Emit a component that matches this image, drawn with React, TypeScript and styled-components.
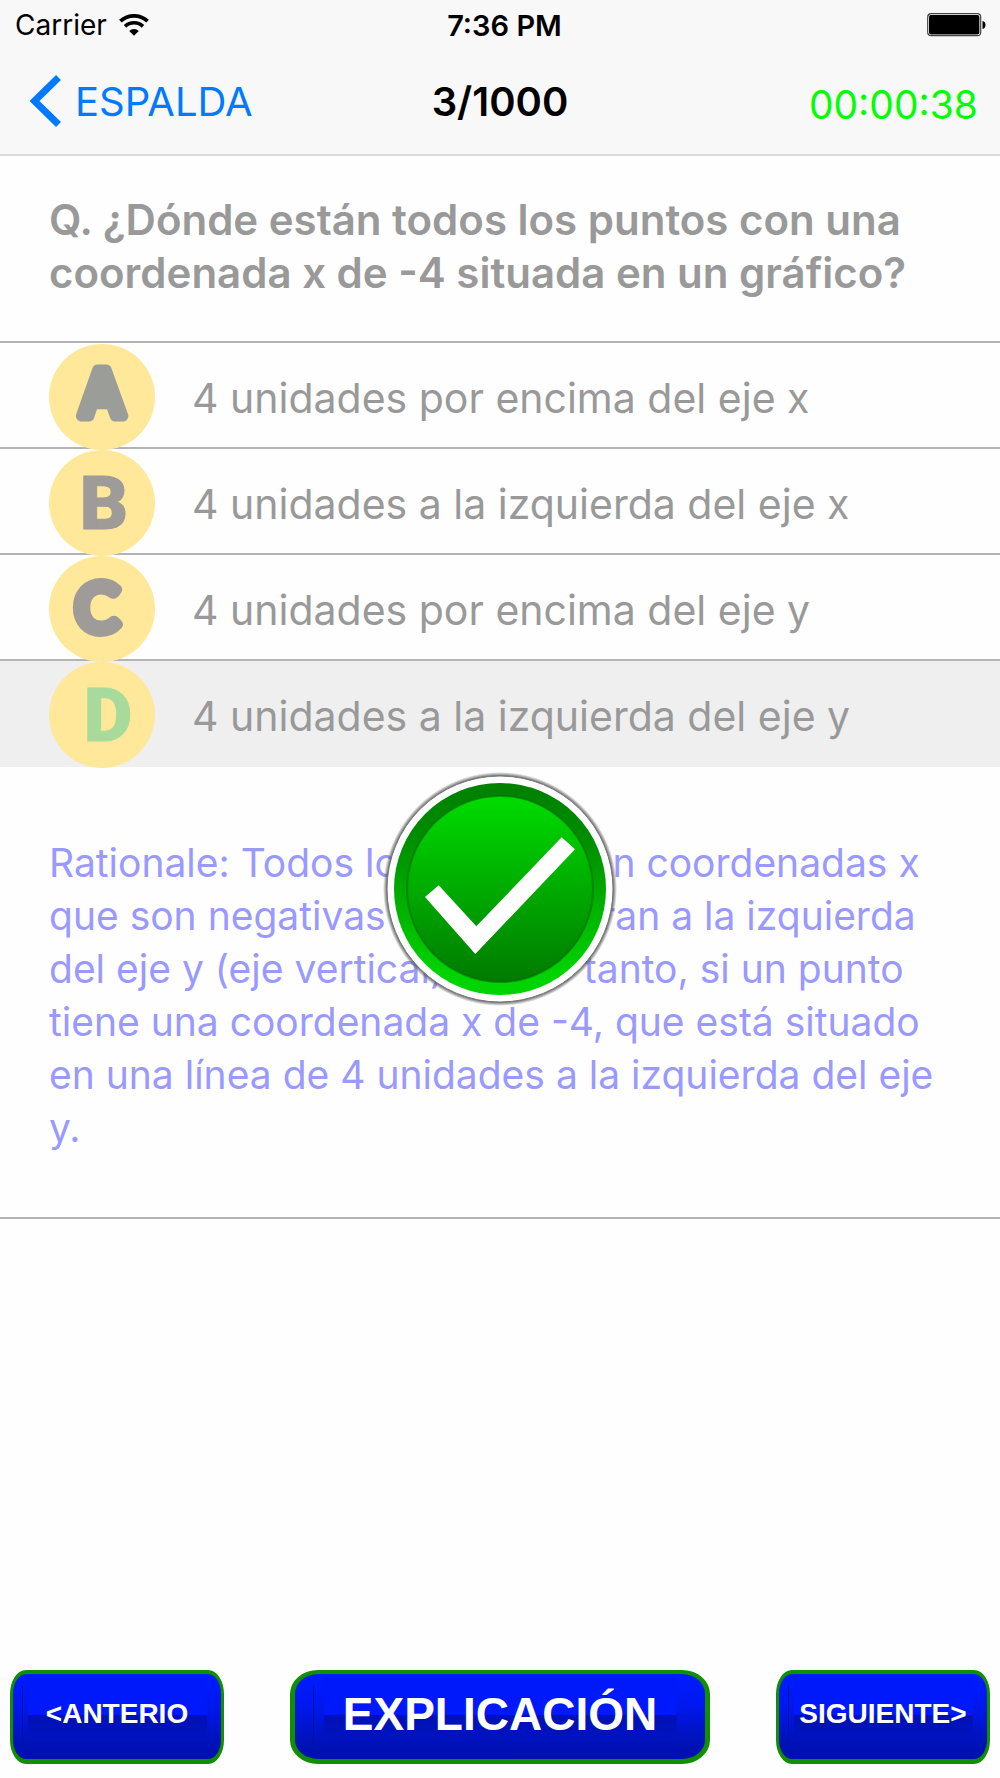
import React from "react";
import styled, { createGlobalStyle } from "styled-components";

const GlobalStyle = createGlobalStyle`
  * { box-sizing: border-box; }
  body {
    margin: 0;
    background: #fefefe;
    font-family: Inter, "Liberation Sans", sans-serif;
  }
  button {
    font-family: inherit;
    border: 0;
    padding: 0;
    background: none;
    cursor: pointer;
  }
`;

const Screen = styled.div`
  min-height: 100vh;
  display: flex;
  flex-direction: column;
`;

const Header = styled.header`
  background: #f8f8f8;
  border-bottom: 2px solid #dadada;
`;

const ThreeColumns = styled.div`
  display: grid;
  grid-template-columns: 1fr auto 1fr;
  align-items: center;
`;

const StatusBar = styled(ThreeColumns)`
  height: 50px;
  padding: 0 14px 0 15px;
  font-size: 28px;
  color: #000;
`;

const Carrier = styled.div`
  display: flex;
  align-items: center;
  gap: 12px;
`;

const Clock = styled.div`
  padding-left: 8px;
  font-size: 29px;
  font-weight: 600;
`;

const Battery = styled.svg`
  justify-self: end;
`;

const NavBar = styled(ThreeColumns)`
  height: 104px;
  padding: 0 22px 2px;
`;

const BackButton = styled.button`
  justify-self: start;
  display: flex;
  align-items: center;
  gap: 14px;
  padding-left: 8px;
  font-size: 40px;
  color: #007aff;
`;

const Progress = styled.h1`
  margin: 0;
  font-size: 40px;
  font-weight: 600;
  color: #000;
`;

const Timer = styled.time`
  justify-self: end;
  padding-top: 6px;
  font-size: 39px;
  color: #00ff00;
`;

const Question = styled.h2`
  margin: 0;
  padding: 37px 50px 42px 49px;
  border-bottom: 2px solid #b4b4b4;
  font-size: 42px;
  line-height: 53px;
  font-weight: 600;
  color: #999;
`;

const Options = styled.ul`
  list-style: none;
  margin: 0;
  padding: 0;
`;

const Option = styled.button<{ $selected: boolean }>`
  display: flex;
  align-items: flex-start;
  gap: 36px;
  width: 100%;
  height: 106px;
  padding: 0 48px;
  border-bottom: 2px solid ${(p) => (p.$selected ? "#efefef" : "#b4b4b4")};
  background: ${(p) => (p.$selected ? "#efefef" : "transparent")};
  text-align: left;
`;

const Badge = styled.svg`
  flex: none;
  position: relative;
`;

const BadgeLetter = styled.text`
  text-anchor: middle;
  stroke-linejoin: round;
`;

const OptionText = styled.span`
  font-size: 41px;
  line-height: 110px;
  color: #999;
`;

const Explanation = styled.section`
  position: relative;
  padding: 69px 49px 63px;
  border-bottom: 2px solid #b4b4b4;
`;

const Rationale = styled.p`
  margin: 0;
  font-size: 39px;
  line-height: 53px;
  color: #9999ff;
`;

const ResultMark = styled.svg`
  position: absolute;
  top: 5px;
  left: 50%;
  margin-left: -117px;
`;

const Footer = styled.footer`
  margin-top: auto;
  padding: 24px 10px 14px;
  display: grid;
  grid-template-columns: 214fr 420fr 214fr;
  gap: 66px;
`;

const GlossyButton = styled.button<{ $wide?: boolean }>`
  height: 94px;
  min-width: 0;
  padding-bottom: 6px;
  border: 4px solid #109000;
  border-width: ${(p) => (p.$wide ? "4px 5px 5px" : "4px 3px 5px")};
  border-radius: ${(p) => (p.$wide ? "28px / 24px" : "16px / 24px")};
  background:
    linear-gradient(#0010a8, #0010a8) ${(p) => (p.$wide ? "18px" : "9px")} 12px / 1px 60px no-repeat,
    linear-gradient(#0019fa 0 58%, #0012b4 59%, #0013c0 100%) 50% 4px / 86% 63px no-repeat,
    linear-gradient(#001cff, #0018f0 35%, #0012b8 80%, #0010b0);
  color: #fff;
  font-family: "Liberation Sans", sans-serif;
  font-weight: 700;
  font-size: ${(p) => (p.$wide ? "46px" : "28px")};
  line-height: 1;
  white-space: nowrap;
`;

const ROUNDED = { family: "Inter, sans-serif", weight: 500, size: 63, stroke: 11 };
const OPEN_ROUNDED = { family: "Lato, sans-serif", weight: 400, size: 65, stroke: 11 };
const SQUARE = { family: "Roboto, sans-serif", weight: 900, size: 75, stroke: 1 };

const options = [
  { letter: "A", text: "4 unidades por encima del eje x", x: 54, y: 73, face: ROUNDED, ink: "#9b9d98" },
  { letter: "B", text: "4 unidades a la izquierda del eje x", x: 56, y: 80, face: SQUARE, ink: "#9e9b98" },
  { letter: "C", text: "4 unidades por encima del eje y", x: 49, y: 76, face: OPEN_ROUNDED, ink: "#9e9b98" },
  { letter: "D", text: "4 unidades a la izquierda del eje y", x: 60, y: 80, face: SQUARE, ink: "#a8db9b" },
];

function WifiIcon() {
  return (
    <svg width="30" height="22" viewBox="0 0 30 22" fill="none" stroke="#000" aria-hidden="true">
      <path d="M1.4 7.2A20 20 0 0 1 28.6 7.2" strokeWidth="3.8" />
      <path d="M6 12.4A13 13 0 0 1 24 12.4" strokeWidth="3.6" />
      <path d="M10.2 17A7 7 0 0 1 19.8 17L15 21.8Z" fill="#000" stroke="none" />
    </svg>
  );
}

function BatteryIcon() {
  return (
    <Battery width="59" height="24" viewBox="0 0 59 24" role="img" aria-label="Battery full">
      <rect x="0.7" y="0.7" width="53" height="22" rx="3.5" fill="#fff" stroke="#444" strokeWidth="1.2" />
      <rect x="2" y="2" width="50.4" height="19.4" rx="2" fill="#000" />
      <path d="M55.5 8q3 .5 3 4t-3 4z" fill="#000" />
    </Battery>
  );
}

function CorrectMark() {
  return (
    <ResultMark width="234" height="234" viewBox="0 0 234 234" role="img" aria-label="Correcto">
      <defs>
        <linearGradient id="ring" x1="0" y1="0" x2="0" y2="1">
          <stop offset="0" stopColor="#008000" />
          <stop offset="0.25" stopColor="#008c00" />
          <stop offset="0.9" stopColor="#00d400" />
        </linearGradient>
        <linearGradient id="face" x1="0" y1="0" x2="0" y2="1">
          <stop offset="0" stopColor="#00dc00" />
          <stop offset="1" stopColor="#007a00" />
        </linearGradient>
        <radialGradient id="halo">
          <stop offset="0.96" stopColor="#555" />
          <stop offset="1" stopColor="#555" stopOpacity="0" />
        </radialGradient>
      </defs>
      <circle cx="117" cy="117" r="117" fill="url(#halo)" />
      <circle cx="117" cy="117" r="113" fill="#fff" stroke="#777" strokeWidth="1" />
      <circle cx="117" cy="117" r="106" fill="url(#ring)" />
      <circle cx="117" cy="117" r="93" fill="url(#face)" stroke="#006400" strokeOpacity="0.5" strokeWidth="2" />
      <path d="M42 125L55.7 113.3L93.3 154.3L178.7 65.3L192 77.3L92.3 182Z" fill="#fff" />
    </ResultMark>
  );
}

export default function App() {
  const selected = "D";
  return (
    <Screen>
      <GlobalStyle />
      <Header>
        <StatusBar>
          <Carrier>
            Carrier <WifiIcon />
          </Carrier>
          <Clock>7:36 PM</Clock>
          <BatteryIcon />
        </StatusBar>
        <NavBar>
          <BackButton type="button">
            <svg width="31" height="52" viewBox="0 0 31 52" fill="none" aria-hidden="true">
              <path d="M28.5 2.5L4.5 26L28.5 49.5" stroke="#007aff" strokeWidth="7" />
            </svg>
            ESPALDA
          </BackButton>
          <Progress>3/1000</Progress>
          <Timer>00:00:38</Timer>
        </NavBar>
      </Header>
      <main>
        <Question>Q. ¿Dónde están todos los puntos con una coordenada x de -4 situada en un gráfico?</Question>
        <Options>
          {options.map((o) => (
            <li key={o.letter}>
              <Option type="button" $selected={o.letter === selected} aria-pressed={o.letter === selected}>
                <Badge width="108" height="108" viewBox="0 0 108 108">
                  <circle cx="54" cy="54" r="53" fill="#ffe899" />
                  <BadgeLetter
                    x={o.x}
                    y={o.y}
                    fontFamily={o.face.family}
                    fontWeight={o.face.weight}
                    fontSize={o.face.size}
                    fill={o.ink}
                    stroke={o.ink}
                    strokeWidth={o.face.stroke}
                  >
                    {o.letter}
                  </BadgeLetter>
                </Badge>
                <OptionText>{o.text}</OptionText>
              </Option>
            </li>
          ))}
        </Options>
        <Explanation>
          <Rationale>
            Rationale: Todos los puntos con coordenadas x que son negativas se encuentran a la izquierda del eje y (eje
            vertical). Por lo tanto, si un punto tiene una coordenada x de -4, que está situado en una línea de 4
            unidades a la izquierda del eje y.
          </Rationale>
          <CorrectMark />
        </Explanation>
      </main>
      <Footer>
        <GlossyButton type="button">&lt;ANTERIO</GlossyButton>
        <GlossyButton type="button" $wide>
          EXPLICACIÓN
        </GlossyButton>
        <GlossyButton type="button">SIGUIENTE&gt;</GlossyButton>
      </Footer>
    </Screen>
  );
}
